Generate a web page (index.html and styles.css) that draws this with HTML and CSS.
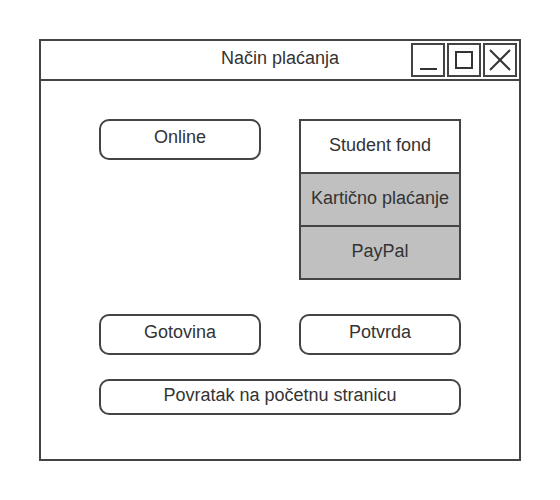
FILE: index.html
```html
<!DOCTYPE html>
<html lang="hr">

<head>
  <meta charset="UTF-8">
  <meta name="viewport" content="width=device-width, initial-scale=1.0">
  <title>Način plaćanja</title>
  <link rel="stylesheet" href="styles.css">
</head>

<body>
  <div class="window">
    <div class="titlebar">
      <span></span>
      <div class="title">Način plaćanja</div>
      <div class="controls">
        <div class="ctrl">
          <svg width="30" height="30" viewBox="0 0 30 30"><line x1="7" y1="24" x2="24" y2="24" /></svg>
        </div>
        <div class="ctrl">
          <svg width="30" height="30" viewBox="0 0 30 30"><rect x="7" y="7" width="16" height="16" /></svg>
        </div>
        <div class="ctrl">
          <svg width="30" height="30" viewBox="0 0 30 30"><line x1="5" y1="5" x2="25" y2="25" /><line x1="25" y1="5" x2="5" y2="25" /></svg>
        </div>
      </div>
    </div>

    <div class="content">
      <button class="btn btn-online">Online</button>

      <div class="list">
        <div class="list-item">Student fond</div>
        <div class="list-item selected">Kartično plaćanje</div>
        <div class="list-item selected">PayPal</div>
      </div>

      <button class="btn btn-cash">Gotovina</button>
      <button class="btn btn-confirm">Potvrda</button>

      <button class="btn btn-back">Povratak na početnu stranicu</button>
    </div>
  </div>
</body>

</html>
```

FILE: styles.css
```css
body {
  margin: 0;
  padding: 39px;
  font-family: "Liberation Sans", Arial, sans-serif;
  font-size: 18px;
  color: #333;
  background: #fff;
}

.window {
  width: 478px;
  height: 418px;
  border: 2px solid #444;
  background: #fff;
}

.titlebar {
  display: grid;
  grid-template-columns: 1fr auto 1fr;
  align-items: center;
  height: 38px;
  border-bottom: 2px solid #444;
}

.title {
  text-align: center;
  padding-bottom: 4px;
}

.controls {
  display: flex;
  justify-content: flex-end;
  gap: 2px;
  padding-right: 2px;
}

.ctrl {
  width: 30px;
  height: 30px;
  border: 2px solid #444;
}

.ctrl svg {
  display: block;
  fill: none;
  stroke: #333;
  stroke-width: 2;
}

.content {
  display: grid;
  grid-template-columns: 162px 162px;
  column-gap: 38px;
  padding: 38px 58px 0;
}

.btn {
  font-family: inherit;
  font-size: 18px;
  color: #333;
  background: #fff;
  border: 2px solid #444;
  border-radius: 10px;
  height: 41px;
  padding: 0 0 4px;
  margin: 0;
}

.btn-online {
  align-self: start;
}

.list {
  border: 2px solid #444;
  background: #c0c0c0;
}

.list-item {
  height: 51px;
  box-sizing: border-box;
  padding-bottom: 3px;
  display: flex;
  align-items: center;
  justify-content: center;
}

.list-item + .list-item {
  height: 53px;
  border-top: 2px solid #444;
}

.list-item:first-child {
  background: #fff;
}

.btn-cash,
.btn-confirm {
  margin-top: 34px;
}

.btn-back {
  grid-column: 1 / 3;
  height: 36px;
  margin-top: 24px;
  padding-bottom: 4px;
}
```
